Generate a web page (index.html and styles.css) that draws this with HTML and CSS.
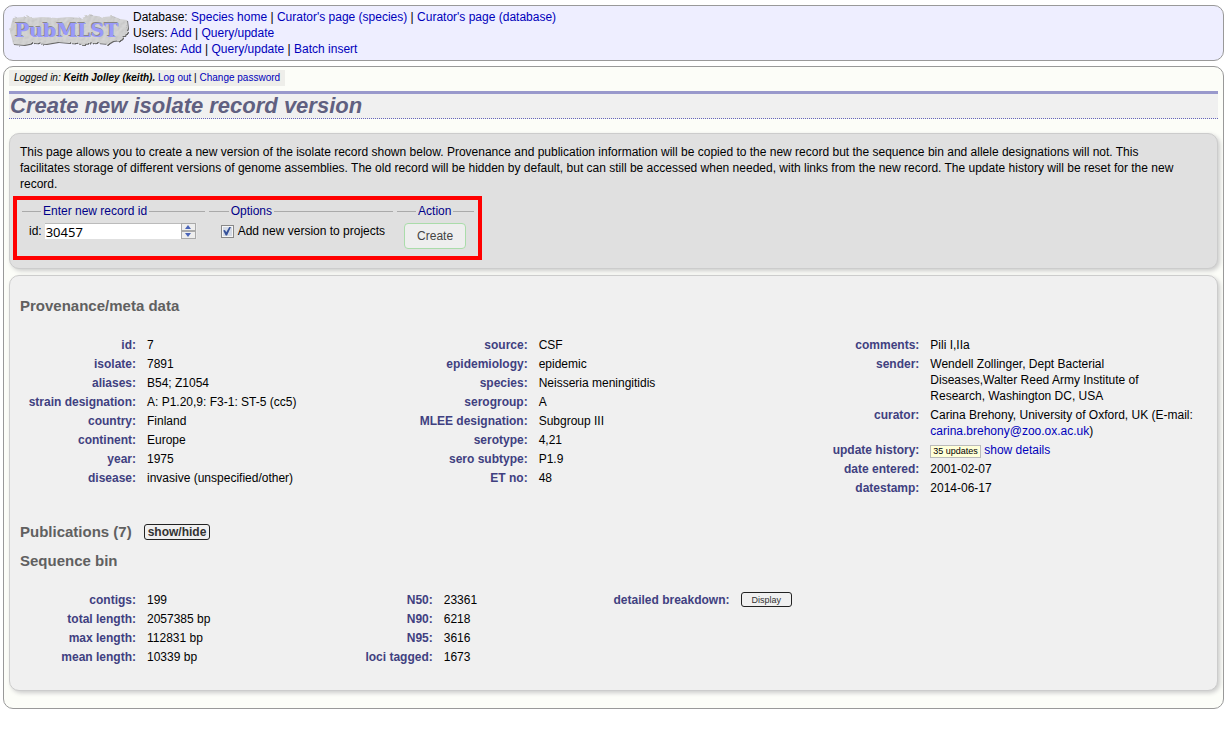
FILE: index.html
```html
<!DOCTYPE html>
<html lang="en">
<head>
<meta charset="utf-8">
<title>Create new isolate record version</title>
<link rel="stylesheet" href="styles.css">
</head>
<body>
<header class="site-header">
  <svg class="logo" viewBox="0 0 120 34" role="img" aria-label="PubMLST">
    <defs>
      <filter id="rock" x="-5%" y="-10%" width="110%" height="125%">
        <feTurbulence type="fractalNoise" baseFrequency="0.25" numOctaves="2" seed="4" result="n"/>
        <feDisplacementMap in="SourceGraphic" in2="n" scale="3" result="d"/>
        <feDiffuseLighting in="n" surfaceScale="0.5" diffuseConstant="1.1" lighting-color="#d0d0d0" result="l">
          <feDistantLight azimuth="225" elevation="65"/>
        </feDiffuseLighting>
        <feComposite in="l" in2="d" operator="in" result="t"/>
        <feDropShadow in="t" dx="1" dy="1" stdDeviation="0.5" flood-color="#666"/>
      </filter>
    </defs>
    <path filter="url(#rock)" fill="#bbb" d="M4 4 L14 3 L18 1 L22 4 L34 3 L48 4 L60 3 L73 4 L80 1 L95 3 L104 2 L111 5 L118 6 L119 14 L116 22 L112 26 L104 27 L99 30 L88 29 L74 30 L60 29 L49 28 L37 30 L25 29 L15 31 L4 30 L3 25 L1 18 L2 11 Z"/>
    <text class="logo-shade" x="5" y="22">PubMLST</text>
    <text class="logo-text" x="6" y="23">PubMLST</text>
  </svg>
  <nav class="site-nav">
    <div>Database: <a href="#">Species home</a> | <a href="#">Curator's page (species)</a> | <a href="#">Curator's page (database)</a></div>
    <div>Users: <a href="#">Add</a> | <a href="#">Query/update</a></div>
    <div>Isolates: <a href="#">Add</a> | <a href="#">Query/update</a> | <a href="#">Batch insert</a></div>
  </nav>
</header>
<main class="page">
  <div class="login"><i>Logged in: <b>Keith Jolley (keith).</b></i> <a href="#">Log out</a> | <a href="#">Change password</a></div>
  <h1 class="title">Create new isolate record version</h1>
  <section class="panel query">
    <p class="intro">This page allows you to create a new version of the isolate record shown below. Provenance and publication information will be copied to the new record but the sequence bin and allele designations will not. This facilitates storage of different versions of genome assemblies. The old record will be hidden by default, but can still be accessed when needed, with links from the new record. The update history will be reset for the new record.</p>
    <form class="record-form">
      <fieldset class="group">
        <legend>Enter new record id</legend>
        <div class="id-row">
          <label for="id">id:</label>
          <span class="stepper">
            <input id="id" class="number" type="number" value="30457">
            <span class="steps">
              <button type="button" aria-label="Increase"><svg viewBox="0 0 6 4"><path d="M3 0 6 4H0Z"/></svg></button>
              <button type="button" aria-label="Decrease"><svg viewBox="0 0 6 4"><path d="M0 0H6L3 4Z"/></svg></button>
            </span>
          </span>
        </div>
      </fieldset>
      <fieldset class="group options">
        <legend>Options</legend>
        <div class="option-row">
          <input id="projects" class="check" type="checkbox" checked>
          <label for="projects">Add new version to projects</label>
        </div>
      </fieldset>
      <fieldset class="group">
        <legend>Action</legend>
        <button type="button" class="create">Create</button>
      </fieldset>
    </form>
  </section>
  <section class="panel record">
    <h2>Provenance/meta data</h2>
    <div class="columns meta">
      <dl>
        <dt>id:</dt><dd>7</dd>
        <dt>isolate:</dt><dd>7891</dd>
        <dt>aliases:</dt><dd>B54; Z1054</dd>
        <dt>strain designation:</dt><dd>A: P1.20,9: F3-1: ST-5 (cc5)</dd>
        <dt>country:</dt><dd>Finland</dd>
        <dt>continent:</dt><dd>Europe</dd>
        <dt>year:</dt><dd>1975</dd>
        <dt>disease:</dt><dd>invasive (unspecified/other)</dd>
      </dl>
      <dl>
        <dt>source:</dt><dd>CSF</dd>
        <dt>epidemiology:</dt><dd>epidemic</dd>
        <dt>species:</dt><dd>Neisseria meningitidis</dd>
        <dt>serogroup:</dt><dd>A</dd>
        <dt>MLEE designation:</dt><dd>Subgroup III</dd>
        <dt>serotype:</dt><dd>4,21</dd>
        <dt>sero subtype:</dt><dd>P1.9</dd>
        <dt>ET no:</dt><dd>48</dd>
      </dl>
      <dl>
        <dt>comments:</dt><dd>Pili I,IIa</dd>
        <dt>sender:</dt><dd>Wendell Zollinger, Dept Bacterial<br>Diseases,Walter Reed Army Institute of<br>Research, Washington DC, USA</dd>
        <dt>curator:</dt><dd>Carina Brehony, University of Oxford, UK (E-mail: <a href="#">carina.brehony@zoo.ox.ac.uk</a>)</dd>
        <dt>update history:</dt><dd><span class="updates">35 updates</span> <a href="#">show details</a></dd>
        <dt>date entered:</dt><dd>2001-02-07</dd>
        <dt>datestamp:</dt><dd>2014-06-17</dd>
      </dl>
    </div>
    <div class="heading-row">
      <h2>Publications (7)</h2>
      <button type="button" class="toggle">show/hide</button>
    </div>
    <h2>Sequence bin</h2>
    <div class="columns bin">
      <dl>
        <dt>contigs:</dt><dd>199</dd>
        <dt>total length:</dt><dd>2057385 bp</dd>
        <dt>max length:</dt><dd>112831 bp</dd>
        <dt>mean length:</dt><dd>10339 bp</dd>
      </dl>
      <dl>
        <dt>N50:</dt><dd>23361</dd>
        <dt>N90:</dt><dd>6218</dd>
        <dt>N95:</dt><dd>3616</dd>
        <dt>loci tagged:</dt><dd>1673</dd>
      </dl>
      <dl>
        <dt>detailed breakdown:</dt><dd><button type="button" class="toggle display">Display</button></dd>
      </dl>
    </div>
  </section>
</main>
</body>
</html>
```
FILE: styles.css
```css
* { box-sizing: border-box; }
body {
  margin: 5px 3px;
  background: #fff;
  color: #000;
  font: 12px/16px "Liberation Sans", Arial, sans-serif;
}
a { color: #00b; text-decoration: none; }
.site-header {
  display: flex;
  gap: 4px;
  padding: 3px 5px;
  background: #eef;
  border: 1px solid #999;
  border-radius: 10px;
}
.logo { flex: none; width: 120px; height: 34px; margin-top: 5px; }
.logo text { font: bold 19px "DejaVu Serif", serif; }
.logo-shade { fill: #888; }
.logo-text { fill: #9999fa; }
.page {
  margin-top: 5px;
  padding: 3px 5px 17px;
  background: #fcfdf8;
  border: 1px solid #999;
  border-radius: 10px;
}
.login {
  width: fit-content;
  padding: 0 5px;
  background: #eeeeea;
  font-size: 10px;
}
.title {
  margin: 5px 0 14px;
  padding-left: 1px;
  border-top: 3px solid #99c;
  border-bottom: 1px dotted #66b;
  background: #f0f0f0;
  color: #606080;
  font: italic bold 22px/24px "Liberation Sans", Arial, sans-serif;
}
.panel {
  padding: 10px;
  border: 1px solid #ccc;
  border-radius: 10px;
  box-shadow: 2px 2px 4px #ccc;
}
.query { background: #e0e0e0; padding-bottom: 8px; }
.intro { margin: 0 0 4px; padding-right: 24px; }
.record-form {
  display: flex;
  gap: 4px;
  width: fit-content;
  height: 64px;
  margin-left: -7px;
  padding: 3px 4px 1px 5px;
  border: 4px solid #f00;
}
.group {
  min-width: 0;
  margin: 0;
  padding: 0 8px 0 7px;
  border: 0;
  border-top: 1px solid #aaa;
}
.options { padding-left: 12px; }
.group legend { margin-left: 12px; padding: 0 2px; color: #008; }
.options legend { margin-left: 8px; }
.id-row, .option-row { display: flex; align-items: center; gap: 4px; margin-top: 4px; }
.id-row { gap: 3px; }
.stepper { display: flex; align-items: center; width: 152px; background: #e8e8e8; }
.number {
  appearance: textfield;
  width: 136px;
  height: 16px;
  padding: 0 1px;
  border: 0;
  border-top: 1px solid #bbb;
  background: #fff;
  color: #000;
  font: 13px/15px "Noto Sans", sans-serif;
}
.number::-webkit-inner-spin-button { appearance: none; margin: 0; }
.steps { display: flex; flex-direction: column; width: 15px; }
.steps button {
  display: grid;
  place-items: center;
  height: 8px;
  padding: 0;
  border: 1px solid #aaa;
  background: #eee;
}
.steps svg { display: block; width: 6px; height: 4px; fill: #4a64b8; }
.check {
  appearance: none;
  width: 13px;
  height: 13px;
  margin: 0;
  border: 1px solid #888;
  box-shadow: inset 0 0 0 1px #f6f6f6;
  background: #d5dbe6;
  display: grid;
  place-items: center;
}
.check:checked::before {
  content: "";
  width: 8px;
  height: 9px;
  background: #35519a;
  clip-path: polygon(0 45%, 22% 38%, 38% 65%, 80% 0, 100% 0, 48% 100%, 32% 100%);
}
.create {
  height: 26px;
  margin-top: 4px;
  padding: 0 12px;
  border: 1px solid #aadcaa;
  border-radius: 4px;
  background: #eee;
  color: #444;
  font: 12px "Liberation Sans", Arial, sans-serif;
}
.record { margin-top: 6px; padding-bottom: 25px; background: #f0f0f0; }
.record h2 {
  margin: 0;
  color: #606060;
  font: bold 15px/16px "Liberation Sans", Arial, sans-serif;
}
.record > h2:first-child { margin-top: 12px; }
.columns { display: grid; }
.meta { grid-template-columns: repeat(3, 1fr); margin: 23px 12px 28px 0; }
.bin { grid-template-columns: repeat(4, 1fr); margin-top: 23px; }
dl {
  display: grid;
  grid-template-columns: 116px 1fr;
  gap: 3px 11px;
  align-content: start;
  margin: 0;
}
dt { color: #404080; font-weight: bold; text-align: right; white-space: nowrap; }
dd { margin: 0; }
.updates {
  display: inline-block;
  padding: 0 2px;
  border: 1px solid #bbb;
  background: #ffffd8;
  font-size: 9px;
  line-height: 11px;
}
.heading-row { display: flex; align-items: center; gap: 12px; margin-bottom: 13px; }
.toggle {
  height: 16px;
  padding: 0 3px;
  border: 1px solid #222;
  border-radius: 3px;
  background: #f0f0f0;
  color: #333;
  font: bold 12px/12px "Liberation Sans", Arial, sans-serif;
}
.display { display: block; height: 15px; padding: 0 10px; font-size: 9px; font-weight: normal; }
```
